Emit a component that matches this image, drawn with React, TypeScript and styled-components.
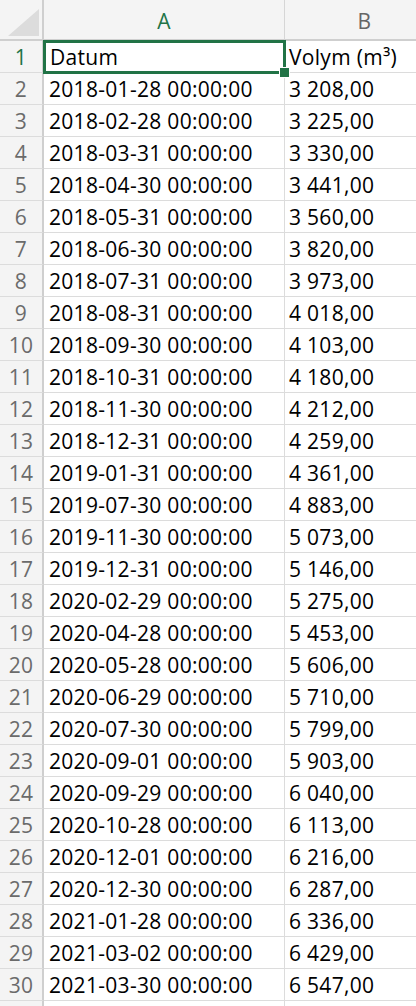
import { Fragment } from 'react';
import styled, { createGlobalStyle } from 'styled-components';

const GlobalStyle = createGlobalStyle`
  html, body {
    margin: 0;
    padding: 0;
    background: #ffffff;
    overflow: hidden;
  }
`;

const EXCEL_GREEN = '#217346';

const rows: [string, string][] = [
  ['2018-01-28 00:00:00', '3 208,00'],
  ['2018-02-28 00:00:00', '3 225,00'],
  ['2018-03-31 00:00:00', '3 330,00'],
  ['2018-04-30 00:00:00', '3 441,00'],
  ['2018-05-31 00:00:00', '3 560,00'],
  ['2018-06-30 00:00:00', '3 820,00'],
  ['2018-07-31 00:00:00', '3 973,00'],
  ['2018-08-31 00:00:00', '4 018,00'],
  ['2018-09-30 00:00:00', '4 103,00'],
  ['2018-10-31 00:00:00', '4 180,00'],
  ['2018-11-30 00:00:00', '4 212,00'],
  ['2018-12-31 00:00:00', '4 259,00'],
  ['2019-01-31 00:00:00', '4 361,00'],
  ['2019-07-30 00:00:00', '4 883,00'],
  ['2019-11-30 00:00:00', '5 073,00'],
  ['2019-12-31 00:00:00', '5 146,00'],
  ['2020-02-29 00:00:00', '5 275,00'],
  ['2020-04-28 00:00:00', '5 453,00'],
  ['2020-05-28 00:00:00', '5 606,00'],
  ['2020-06-29 00:00:00', '5 710,00'],
  ['2020-07-30 00:00:00', '5 799,00'],
  ['2020-09-01 00:00:00', '5 903,00'],
  ['2020-09-29 00:00:00', '6 040,00'],
  ['2020-10-28 00:00:00', '6 113,00'],
  ['2020-12-01 00:00:00', '6 216,00'],
  ['2020-12-30 00:00:00', '6 287,00'],
  ['2021-01-28 00:00:00', '6 336,00'],
  ['2021-03-02 00:00:00', '6 429,00'],
  ['2021-03-30 00:00:00', '6 547,00'],
];

const Sheet = styled.div`
  position: relative;
  width: 416px;
  height: 1006px;
  overflow: hidden;
  font-family: 'Open Sans', 'Noto Sans', sans-serif;
  font-size: 21px;
  letter-spacing: 0.3px;
  color: #000;
`;

const Grid = styled.div`
  display: grid;
  grid-template-columns: 44px 241px 160px;
  grid-template-rows: 41px;
  grid-auto-rows: 32px;
`;

const Corner = styled.div`
  background: #f4f4f4;
  border-right: 2px solid #cfcfcf;
  border-bottom: 2px solid #cfcfcf;
  box-sizing: border-box;
  display: flex;
  align-items: flex-end;
  justify-content: flex-end;
  padding: 0 3px 3px 0;
`;

const ColHeader = styled.div<{ $active?: boolean }>`
  background: #f4f4f4;
  border-right: 1px solid #d6d6d6;
  border-bottom: 2px solid #cfcfcf;
  box-sizing: border-box;
  display: flex;
  align-items: center;
  justify-content: center;
  padding-top: 2px;
  font-size: 21px;
  color: ${({ $active }) => ($active ? EXCEL_GREEN : '#666666')};
`;

const RowHeader = styled.div<{ $active?: boolean }>`
  background: #f4f4f4;
  border-right: 2px solid #cfcfcf;
  border-bottom: 1px solid #dcdcdc;
  box-sizing: border-box;
  display: flex;
  align-items: flex-end;
  justify-content: center;
  padding-bottom: 3px;
  line-height: 24px;
  color: ${({ $active }) => ($active ? EXCEL_GREEN : '#6b6b6b')};
`;

const Cell = styled.div<{ $pad?: number }>`
  border-right: 1px solid #dcdcdc;
  border-bottom: 1px solid #dcdcdc;
  box-sizing: border-box;
  display: flex;
  align-items: flex-end;
  padding: 0 0 3px ${({ $pad }) => $pad ?? 5}px;
  line-height: 24px;
  white-space: nowrap;
  overflow: hidden;
`;

const Selection = styled.div`
  position: absolute;
  left: 43px;
  top: 40px;
  width: 243px;
  height: 34px;
  border: 3px solid ${EXCEL_GREEN};
  box-sizing: border-box;
  pointer-events: none;
`;

const FillHandle = styled.div`
  position: absolute;
  right: -7px;
  bottom: -7px;
  width: 9px;
  height: 9px;
  background: ${EXCEL_GREEN};
  border: 1px solid #ffffff;
`;

const CornerTriangle = () => (
  <svg width="31" height="27" viewBox="0 0 31 27">
    <polygon points="0,27 31,0 31,27" fill="#dcdcdc" />
  </svg>
);

export default function App() {
  return (
    <>
      <GlobalStyle />
      <Sheet>
        <Grid>
          <Corner>
            <CornerTriangle />
          </Corner>
          <ColHeader $active>A</ColHeader>
          <ColHeader>B</ColHeader>

          <RowHeader $active>1</RowHeader>
          <Cell $pad={6}>Datum</Cell>
          <Cell $pad={4}>Volym (m³)</Cell>

          {rows.map(([date, vol], i) => (
            <Fragment key={date}>
              <RowHeader>{i + 2}</RowHeader>
              <Cell $pad={5}>{date}</Cell>
              <Cell $pad={4}>{vol}</Cell>
            </Fragment>
          ))}

          <RowHeader />
          <Cell />
          <Cell />
        </Grid>
        <Selection>
          <FillHandle />
        </Selection>
      </Sheet>
    </>
  );
}
